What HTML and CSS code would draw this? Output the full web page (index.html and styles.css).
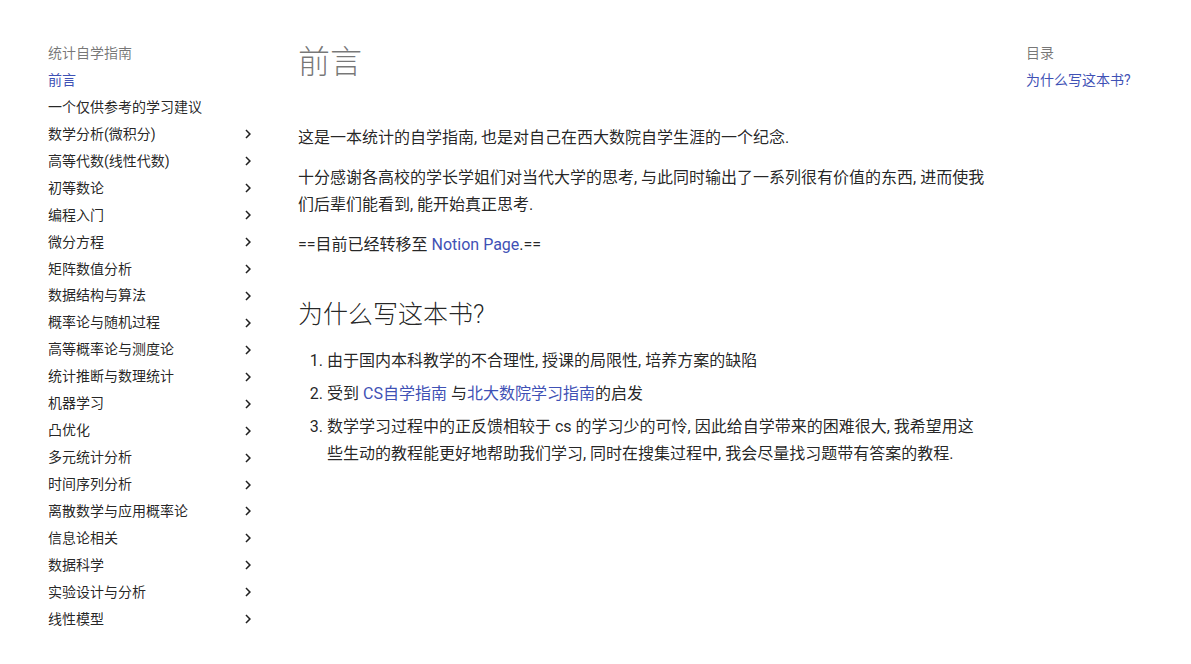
FILE: index.html
```html
<!DOCTYPE html>
<html lang="zh">
<head>
<meta charset="utf-8">
<title>前言 - 统计自学指南</title>
<link rel="stylesheet" href="styles.css">
</head>
<body>
<div class="page">
  <nav class="sidebar">
    <div class="nav-title">统计自学指南</div>
    <ul class="nav-list">
      <li class="nav-item active"><span>前言</span></li>
      <li class="nav-item"><span>一个仅供参考的学习建议</span></li>
      <li class="nav-item"><span>数学分析(微积分)</span><svg class="chev" viewBox="0 0 24 24"><path d="M8.59 16.58L13.17 12 8.59 7.41 10 6l6 6-6 6-1.41-1.42z"/></svg></li>
      <li class="nav-item"><span>高等代数(线性代数)</span><svg class="chev" viewBox="0 0 24 24"><path d="M8.59 16.58L13.17 12 8.59 7.41 10 6l6 6-6 6-1.41-1.42z"/></svg></li>
      <li class="nav-item"><span>初等数论</span><svg class="chev" viewBox="0 0 24 24"><path d="M8.59 16.58L13.17 12 8.59 7.41 10 6l6 6-6 6-1.41-1.42z"/></svg></li>
      <li class="nav-item"><span>编程入门</span><svg class="chev" viewBox="0 0 24 24"><path d="M8.59 16.58L13.17 12 8.59 7.41 10 6l6 6-6 6-1.41-1.42z"/></svg></li>
      <li class="nav-item"><span>微分方程</span><svg class="chev" viewBox="0 0 24 24"><path d="M8.59 16.58L13.17 12 8.59 7.41 10 6l6 6-6 6-1.41-1.42z"/></svg></li>
      <li class="nav-item"><span>矩阵数值分析</span><svg class="chev" viewBox="0 0 24 24"><path d="M8.59 16.58L13.17 12 8.59 7.41 10 6l6 6-6 6-1.41-1.42z"/></svg></li>
      <li class="nav-item"><span>数据结构与算法</span><svg class="chev" viewBox="0 0 24 24"><path d="M8.59 16.58L13.17 12 8.59 7.41 10 6l6 6-6 6-1.41-1.42z"/></svg></li>
      <li class="nav-item"><span>概率论与随机过程</span><svg class="chev" viewBox="0 0 24 24"><path d="M8.59 16.58L13.17 12 8.59 7.41 10 6l6 6-6 6-1.41-1.42z"/></svg></li>
      <li class="nav-item"><span>高等概率论与测度论</span><svg class="chev" viewBox="0 0 24 24"><path d="M8.59 16.58L13.17 12 8.59 7.41 10 6l6 6-6 6-1.41-1.42z"/></svg></li>
      <li class="nav-item"><span>统计推断与数理统计</span><svg class="chev" viewBox="0 0 24 24"><path d="M8.59 16.58L13.17 12 8.59 7.41 10 6l6 6-6 6-1.41-1.42z"/></svg></li>
      <li class="nav-item"><span>机器学习</span><svg class="chev" viewBox="0 0 24 24"><path d="M8.59 16.58L13.17 12 8.59 7.41 10 6l6 6-6 6-1.41-1.42z"/></svg></li>
      <li class="nav-item"><span>凸优化</span><svg class="chev" viewBox="0 0 24 24"><path d="M8.59 16.58L13.17 12 8.59 7.41 10 6l6 6-6 6-1.41-1.42z"/></svg></li>
      <li class="nav-item"><span>多元统计分析</span><svg class="chev" viewBox="0 0 24 24"><path d="M8.59 16.58L13.17 12 8.59 7.41 10 6l6 6-6 6-1.41-1.42z"/></svg></li>
      <li class="nav-item"><span>时间序列分析</span><svg class="chev" viewBox="0 0 24 24"><path d="M8.59 16.58L13.17 12 8.59 7.41 10 6l6 6-6 6-1.41-1.42z"/></svg></li>
      <li class="nav-item"><span>离散数学与应用概率论</span><svg class="chev" viewBox="0 0 24 24"><path d="M8.59 16.58L13.17 12 8.59 7.41 10 6l6 6-6 6-1.41-1.42z"/></svg></li>
      <li class="nav-item"><span>信息论相关</span><svg class="chev" viewBox="0 0 24 24"><path d="M8.59 16.58L13.17 12 8.59 7.41 10 6l6 6-6 6-1.41-1.42z"/></svg></li>
      <li class="nav-item"><span>数据科学</span><svg class="chev" viewBox="0 0 24 24"><path d="M8.59 16.58L13.17 12 8.59 7.41 10 6l6 6-6 6-1.41-1.42z"/></svg></li>
      <li class="nav-item"><span>实验设计与分析</span><svg class="chev" viewBox="0 0 24 24"><path d="M8.59 16.58L13.17 12 8.59 7.41 10 6l6 6-6 6-1.41-1.42z"/></svg></li>
      <li class="nav-item"><span>线性模型</span><svg class="chev" viewBox="0 0 24 24"><path d="M8.59 16.58L13.17 12 8.59 7.41 10 6l6 6-6 6-1.41-1.42z"/></svg></li>
    </ul>
  </nav>
  <main class="content">
    <h1>前言</h1>
    <p>这是一本统计的自学指南, 也是对自己在西大数院自学生涯的一个纪念.</p>
    <p>十分感谢各高校的学长学姐们对当代大学的思考, 与此同时输出了一系列很有价值的东西, 进而使我们后辈们能看到, 能开始真正思考.</p>
    <p>==目前已经转移至 <a href="#">Notion Page</a>.==</p>
    <h2>为什么写这本书?</h2>
    <ol>
      <li>由于国内本科教学的不合理性, 授课的局限性, 培养方案的缺陷</li>
      <li>受到 <a href="#">CS自学指南</a> 与<a href="#">北大数院学习指南</a>的启发</li>
      <li>数学学习过程中的正反馈相较于 cs 的学习少的可怜, 因此给自学带来的困难很大, 我希望用这些生动的教程能更好地帮助我们学习, 同时在搜集过程中, 我会尽量找习题带有答案的教程.</li>
    </ol>
  </main>
  <aside class="toc">
    <div class="toc-title">目录</div>
    <a class="toc-link" href="#">为什么写这本书?</a>
  </aside>
</div>
</body>
</html>
```

FILE: styles.css
```css
html, body {
  margin: 0;
  padding: 0;
  background: #fff;
}
body {
  font-family: Roboto, "Noto Sans CJK SC", sans-serif;
  color: rgba(0, 0, 0, 0.87);
  -webkit-font-smoothing: antialiased;
}
.page {
  display: flex;
  align-items: flex-start;
  padding-top: 40px;
}
.sidebar {
  width: 210px;
  margin-left: 48px;
  flex: none;
  font-size: 14px;
}
.nav-title {
  color: rgba(0, 0, 0, 0.54);
  line-height: 27px;
  height: 27px;
}
.nav-list {
  list-style: none;
  margin: 0;
  padding: 0;
}
.nav-item {
  display: flex;
  align-items: center;
  justify-content: space-between;
  height: 26.95px;
  line-height: 27px;
}
.nav-item.active {
  color: #3f51b5;
}
.chev {
  width: 18px;
  height: 18px;
  fill: rgba(0, 0, 0, 0.87);
  margin-right: 1px;
}
.content {
  width: 692px;
  margin-left: 40px;
  flex: none;
  font-size: 16px;
}
h1 {
  font-size: 32px;
  font-weight: 300;
  color: rgba(0, 0, 0, 0.54);
  line-height: 44px;
  margin: 0 0 40px 0;
}
p {
  margin: 0 0 13px 0;
  line-height: 27px;
}
a {
  color: #3f51b5;
  text-decoration: none;
}
h2 {
  font-size: 25px;
  font-weight: 300;
  line-height: 36px;
  margin: 39px 0 14px 0;
}
ol {
  margin: 0 14px 0 0;
  padding-left: 29px;
}
ol li {
  line-height: 27px;
  margin-bottom: 6px;
}
.toc {
  margin-left: 36px;
  font-size: 14px;
  flex: none;
}
.toc-title {
  color: rgba(0, 0, 0, 0.54);
  line-height: 27px;
  height: 27px;
}
.toc-link {
  display: block;
  line-height: 27px;
}
```
